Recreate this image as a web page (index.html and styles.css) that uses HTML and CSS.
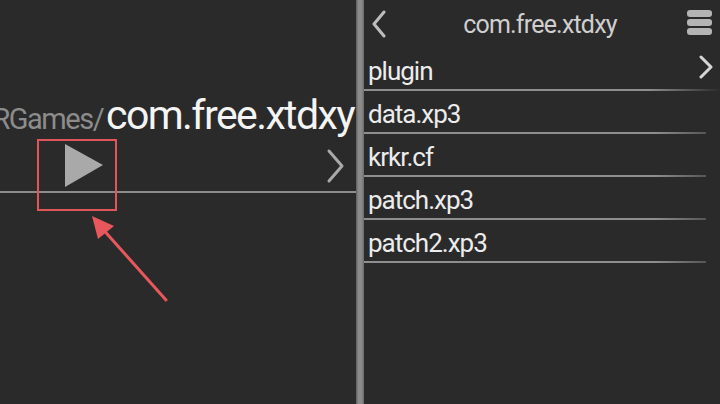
FILE: index.html
```html
<!DOCTYPE html>
<html lang="en">
    <head>
        <meta charset="UTF-8" />
        <meta name="viewport" content="width=device-width, initial-scale=1.0" />
        <title>File Browser</title>
        <link rel="stylesheet" href="styles.css">
    </head>
    <body>
        <div class="screen">
            <section class="pane-left">
                <div class="path">
                    <span class="path-parent">KRGames/</span>
                    <span class="path-current">com.free.xtdxy</span>
                </div>
                <div class="toolbar">
                    <svg class="play" width="40" height="44" viewBox="0 0 40 44">
                        <polygon points="0,0 38,21 0,43" fill="#a9a9a9" />
                    </svg>
                    <svg class="chevron" width="20" height="36" viewBox="0 0 20 36">
                        <polyline points="3,3 16,18 3,33" fill="none" stroke="#a9a9a9" stroke-width="3" stroke-linecap="round" stroke-linejoin="round" />
                    </svg>
                </div>
            </section>

            <div class="divider"></div>

            <section class="pane-right">
                <header class="header">
                    <svg class="back" width="16" height="28" viewBox="0 0 16 28">
                        <polyline points="13,2 3,14 13,26" fill="none" stroke="#bdbdbd" stroke-width="3" stroke-linecap="round" stroke-linejoin="round" />
                    </svg>
                    <div class="header-title">com.free.xtdxy</div>
                    <div class="menu">
                        <span></span>
                        <span></span>
                        <span></span>
                    </div>
                </header>
                <ul class="file-list">
                    <li>
                        <span>plugin</span>
                        <svg width="16" height="24" viewBox="0 0 16 24">
                            <polyline points="3,2 13,12 3,22" fill="none" stroke="#d6d6d6" stroke-width="3" stroke-linecap="round" stroke-linejoin="round" />
                        </svg>
                    </li>
                    <li><span>data.xp3</span></li>
                    <li><span>krkr.cf</span></li>
                    <li><span>patch.xp3</span></li>
                    <li><span>patch2.xp3</span></li>
                </ul>
            </section>

            <!-- annotation over the screenshot -->
            <div class="mark-box"></div>
            <svg class="mark-arrow" width="100" height="100" viewBox="0 0 100 100">
                <line x1="86" y1="92" x2="20" y2="18" stroke="#e8575b" stroke-width="3" stroke-linecap="round" />
                <polygon points="12,8 34,18 18,31" fill="#e8575b" />
            </svg>
        </div>
    </body>
</html>
```

FILE: styles.css
```css
body {
    margin: 0;
    background-color: #2a2a2a;
    font-family: Roboto, "Noto Sans", sans-serif;
}

.screen {
    position: relative;
    display: flex;
    width: 720px;
    height: 404px;
    overflow: hidden;
    background-color: #2a2a2a;
}

.pane-left {
    width: 356px;
    display: flex;
    flex-direction: column;
}

.path {
    margin-top: 90px;
    height: 50px;
    display: flex;
    justify-content: flex-end;
    align-items: baseline;
    white-space: nowrap;
    overflow: hidden;
    padding-right: 2px;
}

.path-parent {
    color: #8c8c8c;
    font-size: 29px;
    letter-spacing: -1.5px;
    margin-right: 3px;
}

.path-current {
    color: #f4f4f4;
    font-size: 41px;
    letter-spacing: -1.6px;
    line-height: 50px;
}

.toolbar {
    height: 51px;
    display: flex;
    align-items: center;
    justify-content: space-between;
    padding: 0 10px 0 65px;
    border-bottom: 2px solid #8c8c8c;
}

.divider {
    width: 8px;
    background: linear-gradient(to right, #5e5e5e, #8a8a8a 30%, #8a8a8a 70%, #6a6a6a);
}

.pane-right {
    flex: 1;
    display: flex;
    flex-direction: column;
}

.header {
    height: 48px;
    display: flex;
    align-items: center;
    padding: 0 8px 0 7px;
}

.header-title {
    flex: 1;
    text-align: center;
    color: #cfcfcf;
    font-size: 25px;
    letter-spacing: -0.8px;
    padding-left: 6px;
}

.menu {
    display: flex;
    flex-direction: column;
    gap: 2px;
    margin-bottom: 4px;
}

.menu span {
    display: block;
    width: 25px;
    height: 7px;
    border-radius: 3px;
    background-color: #b4b4b4;
}

.file-list {
    list-style: none;
    margin: 0;
    padding: 0;
}

.file-list li {
    box-sizing: border-box;
    height: 43px;
    display: flex;
    align-items: center;
    justify-content: space-between;
    padding: 5px 6px 0 4px;
    margin-right: 14px;
    color: #ececec;
    font-size: 26px;
    letter-spacing: -1px;
    border-bottom: 2px solid;
    border-image: linear-gradient(to right, #8e8e8e, #8e8e8e 85%, #555) 1;
}

.file-list li:first-child {
    margin-right: 0;
    border-image: linear-gradient(to right, #8e8e8e, #8e8e8e 80%, #2a2a2a) 1;
}

.file-list li svg {
    margin-top: -8px;
}

.mark-box {
    position: absolute;
    left: 37px;
    top: 139px;
    width: 76px;
    height: 68px;
    border: 2px solid #e05558;
}

.mark-arrow {
    position: absolute;
    left: 80px;
    top: 208px;
}
```
